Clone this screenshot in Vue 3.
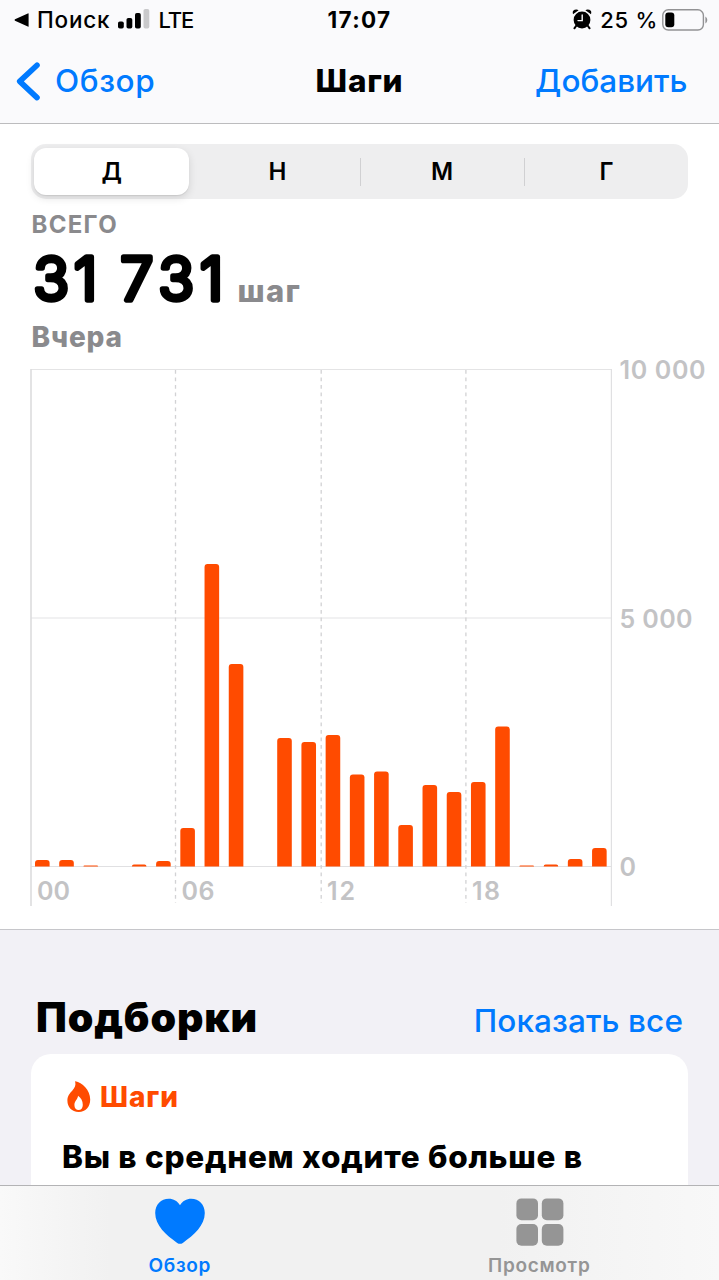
<script setup>
const periods = ['Д', 'Н', 'М', 'Г']

// Bar heights in pixels above the zero line, one per hour
const hours = [6.5, 6.5, 1, 0, 2, 5.5, 38.5, 302.5, 202.5, 0, 128.5, 124.5, 131.5, 92, 95, 41.5, 81.5, 74.5, 84.5, 140, 1, 2, 7.5, 18.5]
const base = 866.5 - 350

const bars = hours
  .map((h, i) => ({ i, h, x: 35 + i * 24.22 }))
  .filter((b) => b.h > 0)

function barPath({ x, h }) {
  const r = Math.min(3, h)
  const top = base - h
  return `M${x} ${base}V${top + r}Q${x} ${top} ${x + r} ${top}H${x + 14.6 - r}Q${x + 14.6} ${top} ${x + 14.6} ${top + r}V${base}Z`
}

const ticks = [
  { x: 37, label: '00', w: 33 },
  { x: 181.5, label: '06', w: 33 },
  { x: 327, label: '12', w: 28 },
  { x: 472, label: '18', w: 28 },
]
</script>

<template>
  <div class="screen">
    <header>
      <div class="status">
        <div class="side">
          <svg class="back-app" width="15" height="14" viewBox="0 0 15 14"><path d="M14.6.8V13.2Q14.6 14 13.8 13.6L1 7.8Q0 7 1 6.3L13.8.4Q14.6 0 14.6.8Z" /></svg>
          <span class="search">Поиск</span>
          <svg class="signal" width="32" height="20" viewBox="0 0 32 20">
            <rect x="0" y="12.5" width="5.8" height="7" rx="1.8" />
            <rect x="8.5" y="9" width="5.8" height="10.5" rx="1.8" />
            <rect x="17" y="4" width="5.8" height="15.5" rx="1.8" />
            <rect x="25.5" y="0" width="5.8" height="19.5" rx="1.8" fill="#c9c9cb" />
          </svg>
          <span class="lte">LTE</span>
        </div>
        <div class="clock">17:07</div>
        <div class="side right">
          <svg class="alarm" width="20" height="21" viewBox="0 0 20 21">
            <circle cx="10" cy="11" r="8.4" />
            <path d="M1 5.2Q0 1.8 2.6.8Q5 0 6.6 1.2ZM19 5.2Q20 1.8 17.4.8Q15 0 13.4 1.2Z" />
            <path d="M4.4 16.5L2.4 19.3M15.6 16.5L17.6 19.3" stroke="#000" stroke-width="2" stroke-linecap="round" />
            <path d="M10.2 6V11.6H6" fill="none" stroke="#fafafc" stroke-width="1.4" stroke-linecap="round" />
          </svg>
          <span class="percent">25 %</span>
          <svg class="battery" width="46" height="22" viewBox="0 0 46 22">
            <rect x=".8" y=".8" width="40.6" height="20.2" rx="5.5" fill="none" stroke="#929294" stroke-width="1.4" />
            <rect x="3.3" y="3.5" width="9" height="14.8" rx="3" />
            <path d="M43.4 7.5Q45.3 8.5 45.3 11T43.4 14.5Z" fill="#929294" />
          </svg>
        </div>
      </div>
      <nav>
        <a class="back">
          <svg width="26" height="40" viewBox="0 0 26 40"><path d="M22 4.2L4.7 20.4L22 36.6" fill="none" stroke="#007aff" stroke-width="5.6" stroke-linecap="round" stroke-linejoin="round" /></svg>
          <span>Обзор</span>
        </a>
        <h1>Шаги</h1>
        <a class="add">Добавить</a>
      </nav>
    </header>

    <section class="panel">
      <div class="segments">
        <div v-for="(p, i) in periods" :key="p" class="segment" :class="{ on: i === 0, line: i > 1 }"><span>{{ p }}</span></div>
      </div>
      <div class="total">ВСЕГО</div>
      <div class="value">
        <svg width="200" height="78" viewBox="0 0 200 78"><text x="2.5 43 70 89.5 127.5 169" y="58.3" class="big">31 731</text></svg>
        <span class="unit">шаг</span>
      </div>
      <div class="day">Вчера</div>
      <svg class="chart" width="719" height="570" viewBox="0 0 719 570">
        <path d="M31 19.5H611" stroke="#e4e4e5" />
        <path d="M31 268H611" stroke="#ededee" stroke-width="1.5" />
        <path d="M31 516.5H611" stroke="#e0e0e2" />
        <path d="M31 19V556" stroke="#dcdcde" stroke-width="1.6" />
        <path d="M611.4 19V556" stroke="#e0e0e2" stroke-width="1.2" />
        <path d="M175.5 20V553M321.2 20V553M465.9 20V553" stroke="#d2d2d4" stroke-width="1.3" stroke-dasharray="3.8 3.7" />
        <path v-for="b in bars" :key="b.i" :d="barPath(b)" fill="#ff4b00" />
        <g class="axis">
          <text x="619.5" y="28.9" textLength="86">10 000</text>
          <text x="619.5" y="277.6" textLength="73">5 000</text>
          <text x="619.5" y="525.9" textLength="15.5">0</text>
          <text v-for="t in ticks" :key="t.label" :x="t.x" y="550.3" :textLength="t.w">{{ t.label }}</text>
        </g>
      </svg>
    </section>

    <section class="collections">
      <div class="heading">
        <h2>Подборки</h2>
        <a>Показать все</a>
      </div>
      <article>
        <div class="kind">
          <svg width="24" height="32" viewBox="0 0 24 32">
            <path fill-rule="evenodd" d="M8.2.8Q7.6.2 8.4.2C15 1.2 23.2 8.8 23.2 18.5C23.2 26 18.6 31 11.7 31C4.8 31 .4 26.2.4 19.6C.4 15 2.6 12.7 5.2 9.8C7.8 6.8 9 4.3 8.2.8ZM11 14.8C11.2 17.6 7.4 20.2 7.4 24C7.4 27.2 9.2 29 11.6 29C14.1 29 15.8 27 15.8 23.9C15.8 20 14 16.6 11 14.8Z" fill="#ff4b00" />
          </svg>
          <span>Шаги</span>
        </div>
        <p>Вы в среднем ходите больше в</p>
      </article>
    </section>

    <footer>
      <div class="tab active">
        <svg width="52" height="48" viewBox="0 0 52 48"><path d="M26 7.2C28.5 3 32.5.8 37.2.8C45 .8 50.8 6.5 50.8 15C50.8 27.5 40 37 28.8 44.9Q26 46.6 23.2 44.9C12 37 1.2 27.5 1.2 15C1.2 6.5 7 .8 14.8.8C19.5.8 23.5 3 26 7.2Z" fill="#007aff" /></svg>
        <span>Обзор</span>
      </div>
      <div class="tab">
        <svg width="52" height="48" viewBox="0 0 52 48" fill="#959595">
          <rect x="3.4" y=".4" width="21.6" height="21.8" rx="5" />
          <rect x="28.8" y=".4" width="21.6" height="21.8" rx="5" />
          <rect x="3.4" y="26" width="21.6" height="21.8" rx="5" />
          <rect x="28.8" y="26" width="21.6" height="21.8" rx="5" />
        </svg>
        <span>Просмотр</span>
      </div>
    </footer>
  </div>
</template>

<style>
body {
  margin: 0;
  overflow: hidden;
}
</style>

<style scoped>
.screen {
  width: 719px;
  height: 1280px;
  display: flex;
  flex-direction: column;
  overflow: hidden;
  background: #f2f1f6;
  color: #000;
  font-family: Inter, "Liberation Sans", sans-serif;
  white-space: nowrap;
}
header {
  box-sizing: border-box;
  height: 124px;
  flex: none;
  background: #fafafc;
  border-bottom: 1.5px solid #bcbcbe;
}
.status {
  display: grid;
  grid-template-columns: 1fr auto 1fr;
  align-items: center;
  height: 39px;
  margin-bottom: 1px;
  font-size: 22px;
  font-weight: 500;
}
.side {
  display: flex;
  align-items: center;
  padding-left: 14px;
}
.search {
  margin-left: 8px;
  font-size: 22.5px;
  letter-spacing: 0.8px;
}
.signal {
  margin: -1px 0 0 8px;
}
.lte {
  margin-left: 8px;
  letter-spacing: -1px;
}
.clock {
  font-weight: 700;
  font-size: 22.5px;
  letter-spacing: 1.3px;
}
.right {
  justify-content: flex-end;
  padding: 0 11px 0 0;
}
.percent {
  margin: 0 4px 0 8px;
  letter-spacing: 0.7px;
}
nav {
  display: grid;
  grid-template-columns: 1fr auto 1fr;
  align-items: center;
  height: 81px;
  font-size: 31.5px;
  color: #007aff;
}
.back {
  display: flex;
  align-items: center;
  padding-left: 15px;
  font-weight: 500;
  letter-spacing: 0.6px;
}
.back span {
  margin-left: 14px;
}
h1 {
  margin: 0;
  font-size: 31.5px;
  font-weight: 800;
  letter-spacing: 0.8px;
  color: #000;
}
.add {
  text-align: right;
  padding-right: 31.5px;
  font-weight: 500;
}
.panel {
  box-sizing: border-box;
  height: 806px;
  flex: none;
  padding-top: 20px;
  background: #fff;
  border-bottom: 1px solid #c6c6ca;
  overflow: hidden;
}
.segments {
  display: grid;
  grid-template-columns: repeat(4, 1fr);
  align-items: center;
  box-sizing: border-box;
  width: 657px;
  height: 55px;
  margin-left: 31px;
  background: #eeeeef;
  border-radius: 15px;
  font-size: 24px;
  font-weight: 600;
  text-align: center;
}
.segment {
  line-height: 28px;
}
.segment.line {
  border-left: 1.5px solid #d0d0d2;
}
.segment.on {
  height: 47px;
  line-height: 47px;
  margin: 0 6px 0 3px;
  background: #fff;
  border-radius: 12px;
  box-shadow: 0 3px 8px rgba(0, 0, 0, 0.12), 0 1px 1px rgba(0, 0, 0, 0.08);
}
.total {
  height: 34px;
  margin: 9px 0 0 31.5px;
  line-height: 34px;
  font-size: 24px;
  font-weight: 750;
  letter-spacing: 1.3px;
  color: #8a8a8d;
}
.value {
  display: flex;
  height: 78px;
  padding-left: 31px;
}
.big {
  font-size: 58.5px;
  font-weight: 300;
  stroke: #000;
  stroke-width: 5.4px;
  stroke-linejoin: round;
}
.unit {
  height: 40px;
  margin: 29px 0 0 6.5px;
  font-size: 31px;
  font-weight: 800;
  line-height: 40px;
  letter-spacing: 1.3px;
  color: #8a8a8d;
}
.day {
  height: 30px;
  margin-left: 31.5px;
  line-height: 34px;
  font-size: 28px;
  font-weight: 800;
  letter-spacing: 0.85px;
  color: #8a8a8d;
}
.chart {
  display: block;
}
.axis {
  fill: #c3c3c5;
  font-size: 25px;
  font-weight: 600;
}
.collections {
  flex: 1;
  min-height: 0;
  overflow: hidden;
}
.heading {
  display: flex;
  justify-content: space-between;
  align-items: baseline;
  height: 62px;
  padding: 62px 36px 0 36px;
}
h2 {
  margin: 0;
  font-size: 41px;
  font-weight: 900;
  line-height: 50px;
  letter-spacing: 0.9px;
}
.heading a {
  font-size: 31.5px;
  font-weight: 500;
  letter-spacing: 0.1px;
  color: #007aff;
}
article {
  box-sizing: border-box;
  width: 657px;
  height: 200px;
  margin-left: 31px;
  padding: 26px 32px 0 31px;
  background: #fff;
  border-radius: 20px;
}
.kind {
  display: flex;
  align-items: center;
  height: 34px;
  padding-left: 5px;
  font-size: 28px;
  font-weight: 800;
  letter-spacing: 0.9px;
  color: #ff4b00;
}
.kind span {
  margin-left: 9px;
}
p {
  margin: 22px 0 0;
  font-size: 31.5px;
  font-weight: 800;
  line-height: 41px;
  letter-spacing: 0.73px;
}
footer {
  display: grid;
  grid-template-columns: 1fr 1fr;
  box-sizing: border-box;
  height: 95px;
  flex: none;
  border-top: 1.5px solid #b3b3b5;
  background: linear-gradient(90deg, #f9f9f9 0, #f1f1f1 110px, #f1f1f1 500px, #f8f8f8 719px);
}
.tab {
  display: flex;
  flex-direction: column;
  align-items: center;
  padding-top: 12px;
  font-size: 19px;
  font-weight: 600;
  letter-spacing: 0.7px;
  color: #959595;
}
.tab.active {
  color: #007aff;
}
.tab span {
  margin-top: 8px;
  line-height: 24px;
}
</style>
